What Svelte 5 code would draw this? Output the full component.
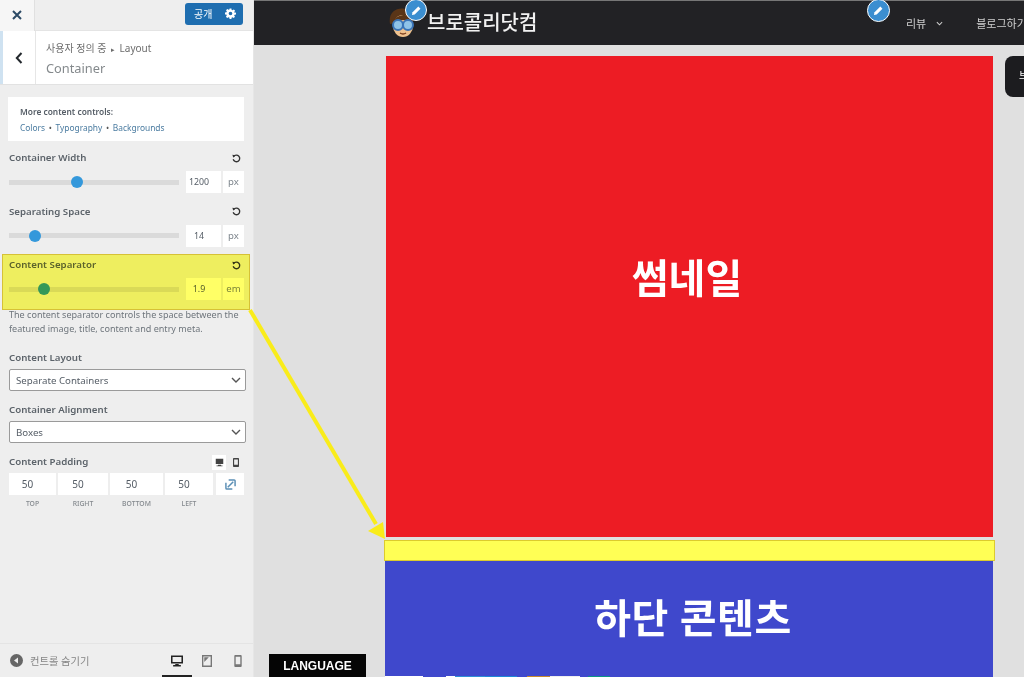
<script>
  const sliders = [
    { label: 'Container Width', pos: 62, value: '1200', unit: 'px' },
    { label: 'Separating Space', pos: 20, value: '14', unit: 'px' }
  ];
  const padding = [
    { v: '50', l: 'TOP', w: 47 },
    { v: '50', l: 'RIGHT', w: 50 },
    { v: '50', l: 'BOTTOM', w: 53 },
    { v: '50', l: 'LEFT', w: 48 }
  ];
  const strips = [
    { w: 38, c: '#ffffff' }, { w: 23, c: '#3f48cc' }, { w: 9, c: '#ffffff' }, { w: 30, c: '#2f8fd8' },
    { w: 32, c: '#1e88d8' }, { w: 10, c: '#3f48cc' }, { w: 23, c: '#c88a2c' }, { w: 30, c: '#eeeeee' },
    { w: 8, c: '#3f48cc' }, { w: 22, c: '#0d9488' }
  ];
</script>

<div class="page">
  <aside class="side">
    <div class="top">
      <button class="close" aria-label="닫기">
        <svg width="10" height="10" viewBox="0 0 10 10"><path d="M1 1l8 8M9 1l-8 8" stroke="#2c4a66" stroke-width="2"/></svg>
      </button>
      <button class="publish">
        <span>공개</span>
        <svg width="11" height="11" viewBox="0 0 24 24"><path fill="#fff" fill-rule="evenodd" d="M10 1h4l.6 3.2 1.9.8 2.7-1.8 2.8 2.8-1.8 2.7.8 1.9L24 10v4l-3.2.6-.8 1.9 1.8 2.7-2.8 2.8-2.7-1.8-1.9.8L14 24h-4l-.6-3.2-1.9-.8-2.7 1.8L2 19l1.8-2.7-.8-1.9L0 14v-4l3.2-.6.8-1.9L2.2 4.8 5 2l2.7 1.8 1.9-.8zM12 8a4 4 0 100 8 4 4 0 000-8z"/></svg>
      </button>
    </div>

    <div class="head">
      <button class="back" aria-label="뒤로">
        <svg width="8" height="12" viewBox="0 0 8 12"><path d="M6.5 1L1.8 6l4.7 5" fill="none" stroke="#23282d" stroke-width="2"/></svg>
      </button>
      <div class="titles">
        <div class="crumb">사용자 정의 중 <i>▸</i> Layout</div>
        <div class="title">Container</div>
      </div>
    </div>

    <div class="panel">
      <div class="notice">
        <b>More content controls:</b>
        <div class="links"><a href="#c">Colors</a> <em>•</em> <a href="#t">Typography</a> <em>•</em> <a href="#b">Backgrounds</a></div>
      </div>

      {#snippet reset()}
        <svg class="reset" width="9" height="9" viewBox="0 0 12 12"><path d="M2.2 3.5A4.4 4.4 0 1 1 1.6 7" fill="none" stroke="#333" stroke-width="1.8"/><path d="M.5 1l4 .6L1.7 5z" fill="#333"/></svg>
      {/snippet}

      {#each sliders as s}
        <section class="ctl">
          <div class="lab"><span>{s.label}</span>{@render reset()}</div>
          <div class="slide">
            <div class="track"><span class="thumb" style="left:{s.pos}px"></span></div>
            <span class="num">{s.value}</span>
            <span class="unit">{s.unit}</span>
          </div>
        </section>
      {/each}

      <section class="ctl sep">
        <div class="lab"><span>Content Separator</span>{@render reset()}</div>
        <div class="slide">
          <div class="track"><span class="thumb" style="left:29px"></span></div>
          <span class="num">1.9</span>
          <span class="unit">em</span>
        </div>
      </section>
      <p class="desc">The content separator controls the space between the featured image, title, content and entry meta.</p>

      <div class="lab plain first">Content Layout</div>
      <div class="select">Separate Containers
        <svg width="10" height="6" viewBox="0 0 10 6"><path d="M1 1l4 4 4-4" fill="none" stroke="#555" stroke-width="1.4"/></svg>
      </div>
      <div class="lab plain second">Container Alignment</div>
      <div class="select">Boxes
        <svg width="10" height="6" viewBox="0 0 10 6"><path d="M1 1l4 4 4-4" fill="none" stroke="#555" stroke-width="1.4"/></svg>
      </div>

      <div class="lab plain third">
        <span>Content Padding</span>
        <div class="devs">
          <span class="dev on"><svg width="9" height="9" viewBox="0 0 12 12"><path fill="#444" d="M1 1h10v7H1zM4 9h4v1h2v1H2v-1h2z"/></svg></span>
          <span class="dev"><svg width="6" height="9" viewBox="0 0 8 12"><path fill="#444" fill-rule="evenodd" d="M1 0h6a1 1 0 011 1v10a1 1 0 01-1 1H1a1 1 0 01-1-1V1a1 1 0 011-1zm.5 2v7h5V2z"/></svg></span>
        </div>
      </div>
      <div class="pads">
        {#each padding as p}
          <div class="pad" style="width:{p.w}px"><span class="padv">{p.v}</span><span class="padl">{p.l}</span></div>
        {/each}
        <div class="pad link"><span class="padv">
          <svg width="11" height="11" viewBox="0 0 12 12"><path d="M4 1h6a1 1 0 011 1v6M8 11H2a1 1 0 01-1-1V4M3 9l6-6" fill="none" stroke="#5b8fb5" stroke-width="1.6"/></svg>
        </span></div>
      </div>
    </div>

    <div class="foot">
      <span class="hide">
        <svg width="13" height="13" viewBox="0 0 13 13"><circle cx="6.5" cy="6.5" r="6.5" fill="#666"/><path d="M8 3.5v6L4 6.5z" fill="#eee"/></svg>
        컨트롤 숨기기
      </span>
      <div class="devices">
        <span class="device active"><svg width="12" height="12" viewBox="0 0 14 13"><path fill="#222" fill-rule="evenodd" d="M0 0h14v9.500H0zM1.800 1.800v5.900h10.400V1.800zM5 10h4v1.200h2.500V13h-9v-1.800H5z"/></svg></span>
        <span class="device"><svg width="10" height="12" viewBox="0 0 11 13"><path fill="#777" fill-rule="evenodd" d="M0 0h11v13H0zM1.500 1.500v10h8v-10zM2.500 2.500h5l-5 5z"/></svg></span>
        <span class="device"><svg width="8" height="12" viewBox="0 0 8 13"><path fill="#777" fill-rule="evenodd" d="M1 0h6a1 1 0 011 1v11a1 1 0 01-1 1H1a1 1 0 01-1-1V1a1 1 0 011-1zM1.500 2v8h5V2z"/></svg></span>
      </div>
    </div>
  </aside>

  <main class="preview">
    <header class="bar">
      <div class="brand">
        <svg class="avatar" width="28" height="32" viewBox="0 0 28 32">
          <path d="M1 18C-1 6 8 1 16 3c6 1 9 7 8 12z" fill="#5a3517"/>
          <ellipse cx="14" cy="20" rx="10" ry="11" fill="#f0c28e"/>
          <path d="M3 18c2-7 8-9 13-9 4 1 7 3 8 8-6-4-15-4-21 1z" fill="#5a3517"/>
          <circle cx="9" cy="19" r="5" fill="#8fc3e8" stroke="#3a74b8" stroke-width="2"/>
          <circle cx="19" cy="19" r="5" fill="#8fc3e8" stroke="#3a74b8" stroke-width="2"/>
          <path d="M11 27q3 2 6 0" stroke="#7a3d1c" stroke-width="1.400" fill="none"/>
        </svg>
        <span class="logo">브로콜리닷컴</span>
        <span class="pencil brandpen">
          <svg width="11" height="11" viewBox="0 0 12 12"><path d="M1 11l.7-3L8 1.700 10.300 4 4 10.300z" fill="#fff"/></svg>
        </span>
      </div>
      <nav class="nav">
        <span class="pencil navpen">
          <svg width="11" height="11" viewBox="0 0 12 12"><path d="M1 11l.7-3L8 1.700 10.300 4 4 10.300z" fill="#fff"/></svg>
        </span>
        <span class="item">리뷰</span>
        <svg class="caret" width="7" height="5" viewBox="0 0 8 5"><path d="M1 1l3 3 3-3" fill="none" stroke="#ccc" stroke-width="1.200"/></svg>
        <span class="item blog">블로그하기</span>
      </nav>
    </header>

    <div class="stage">
      <div class="column">
        <div class="thumbbox">썸네일</div>
        <div class="gap"></div>
        <div class="bottom">하단 콘텐츠</div>
        <div class="strips">
          {#each strips as s}<span style="width:{s.w}px;background:{s.c}"></span>{/each}
        </div>
      </div>
      <div class="sidecard"><span>브</span></div>
    </div>

    <div class="language">LANGUAGE</div>
  </main>

  <div class="hl"></div>
  <svg class="arrow" width="1024" height="677" viewBox="0 0 1024 677">
    <path d="M250 310L376 524" stroke="#f9ec1a" stroke-width="4" fill="none"/>
    <path d="M385 539l-17-8 15-9z" fill="#f9ec1a"/>
  </svg>
</div>

<style>
  :global(body) { margin: 0; }
  .page {
    position: relative;
    width: 1024px;
    height: 677px;
    overflow: hidden;
    display: flex;
    font-family: "Noto Sans", "Noto Sans CJK KR", sans-serif;
    background: #e0e0e0;
  }
  button { border: 0; padding: 0; font: inherit; cursor: pointer; }
  .side {
    width: 254px;
    flex: none;
    background: #eeeeee;
    border-right: 1px solid #e6e6e6;
    box-sizing: border-box;
    display: flex;
    flex-direction: column;
    height: 677px;
  }
  .top {
    height: 31px;
    flex: none;
    display: flex;
    justify-content: space-between;
    align-items: center;
    padding-right: 10px;
    border-bottom: 1px solid #e4e4e4;
    box-sizing: border-box;
  }
  .close {
    width: 35px;
    height: 31px;
    background: #f6f6f6;
    border-right: 1px solid #e0e0e0;
    display: flex;
    align-items: center;
    justify-content: center;
  }
  .publish {
    width: 58px;
    height: 22px;
    margin-top: -3px;
    background: #1f6eb0;
    border-radius: 3px;
    color: #fff;
    font-size: 10px;
    display: flex;
    align-items: center;
    justify-content: space-between;
    padding: 0 7px 0 9px;
    box-sizing: border-box;
  }
  .head {
    height: 54px;
    flex: none;
    display: flex;
    background: #fff;
    border-bottom: 1px solid #e2e2e2;
    box-sizing: border-box;
  }
  .back {
    width: 36px;
    background: #fff;
    border-left: 3px solid #cfe2f1;
    border-right: 1px solid #e6e6e6;
    box-sizing: border-box;
    display: flex;
    align-items: center;
    justify-content: center;
  }
  .titles { padding: 10px 0 0 10px; }
  .crumb { font-size: 10px; line-height: 14px; color: #6d6d6d; }
  .crumb i { font-style: normal; font-size: 7px; margin: 0 2px; }
  .title { font-size: 12.8px; line-height: 19px; margin-top: 2px; color: #84898c; }
  .panel { flex: 1; padding: 12px 9px 0 9px; }
  .notice {
    margin-left: -1px;
    width: 236px;
    height: 44px;
    box-sizing: border-box;
    background: #fff;
    padding: 8px 12px 0 12px;
    font-size: 8.4px;
    color: #555d66;
    margin-bottom: 8px;
  }
  .notice b { display: block; line-height: 14px; font-weight: 600; }
  .links { line-height: 14px; margin-top: 2px; }
  .links a { color: #4a7ba0; text-decoration: none; }
  .links em { font-style: normal; color: #555; margin: 0 1.5px; }
  .ctl { height: 53.5px; box-sizing: border-box; }
  .lab {
    display: flex;
    justify-content: space-between;
    align-items: center;
    width: 235px;
    font-size: 9.7px;
    font-weight: 600;
    line-height: 14px;
    color: #5c636a;
    padding-top: 2px;
  }
  .reset { margin-right: 3px; }
  .slide { display: flex; align-items: center; margin-top: 6px; height: 22px; }
  .track {
    position: relative;
    width: 170px;
    height: 5px;
    background: #dadada;
    margin-right: 7px;
  }
  .thumb {
    position: absolute;
    top: -3.500px;
    width: 12px;
    height: 12px;
    border-radius: 50%;
    background: #3498db;
  }
  .num, .unit {
    background: #fff;
    height: 22px;
    line-height: 22px;
    text-align: center;
    font-size: 9.600px;
    color: #555d66;
  }
  .num { width: 35px; margin-right: 2px; padding-right: 9px; box-sizing: border-box; font-size: 8.8px; }
  .unit { width: 21px; color: #7d858c; }
  .sep { height: 53px; }
  .desc {
    margin: -1px 0 0;
    width: 234px;
    font-size: 9.050px;
    line-height: 14px;
    color: #6e757c;
  }
  .plain { font-size: 9.700px; padding-top: 1px; }
  .first { margin-top: 14px; }
  .second { margin-top: 11px; }
  .third { margin-top: 11px; height: 14px; }
  .select {
    width: 237px;
    height: 22px;
    margin-top: 4px;
    background: #fff;
    border: 1px solid #9a9a9a;
    border-radius: 2px;
    box-sizing: border-box;
    padding: 0 4px 0 6px;
    font-size: 9.700px;
    color: #555d66;
    display: flex;
    justify-content: space-between;
    align-items: center;
  }
  .devs { display: flex; align-items: center; gap: 3px; margin-right: 1px; }
  .dev { width: 14px; height: 15px; display: flex; align-items: center; justify-content: center; }
  .dev.on { background: #fff; }
  .pads { display: flex; gap: 2px; margin-top: 4px; }
  .pad { display: flex; flex-direction: column; align-items: center; }
  .padv {
    width: 100%;
    height: 22px;
    background: #fff;
    display: flex;
    align-items: center;
    justify-content: center;
    font-size: 10px;
    color: #555d66;
    padding-right: 10px;
    box-sizing: border-box;
  }
  .link .padv { padding-right: 0; }
  .padl { font-size: 6.800px; line-height: 16px; color: #84898e; margin-top: 1px; font-weight: 500; }
  .link { width: 28px; margin-left: 1px; }
  .foot {
    height: 33px;
    flex: none;
    border-top: 1px solid #e4e4e4;
    display: flex;
    justify-content: space-between;
    align-items: center;
    padding: 0 0 0 10px;
  }
  .hide { display: flex; align-items: center; gap: 7px; font-size: 10.300px; color: #858585; }
  .devices { display: flex; align-items: flex-end; height: 33px; }
  .device {
    width: 30.500px;
    height: 33px;
    box-sizing: border-box;
    display: flex;
    align-items: center;
    justify-content: center;
    border-bottom: 2px solid transparent;
    padding-top: 2px;
  }
  .active { border-bottom-color: #222; }
  .preview {
    flex: 1;
    position: relative;
    display: flex;
    flex-direction: column;
    min-width: 0;
  }
  .bar {
    height: 45px;
    flex: none;
    background: #222225;
    border-top: 1px solid #777;
    box-sizing: border-box;
    display: flex;
    padding-left: 135px;
    position: relative;
    color: #fff;
  }
  .brand { display: flex; align-items: center; gap: 10px; position: relative; height: 44px; }
  .avatar { margin-top: -2px; }
  .logo { font-size: 20px; font-weight: 500; color: #f2f2f2; margin-top: -3px; white-space: nowrap; }
  .pencil {
    position: absolute;
    width: 20px;
    height: 20px;
    border-radius: 50%;
    background: #3b8ed0;
    border: 1px solid #fff;
    box-sizing: border-box;
    display: flex;
    align-items: center;
    justify-content: center;
  }
  .brandpen { left: 16px; top: -2px; width: 22px; height: 22px; }
  .nav {
    position: absolute;
    left: 652px;
    top: 0;
    height: 44px;
    display: flex;
    align-items: center;
    white-space: nowrap;
    font-size: 11px;
    color: #cfcfcf;
  }
  .navpen { left: -39px; top: -2px; width: 23px; height: 23px; }
  .item { margin-top: -1px; }
  .caret { margin-left: 10px; }
  .blog { margin-left: 33px; }
  .stage {
    flex: 1;
    display: flex;
    align-items: flex-start;
    padding: 11px 0 0 131px;
    overflow: hidden;
  }
  .column { width: 608px; flex: none; }
  .thumbbox {
    height: 481px;
    margin-left: 1px;
    width: 607px;
    background: #ed1c24;
    color: #fff;
    font-size: 40px;
    font-weight: 700;
    display: flex;
    align-items: center;
    justify-content: center;
    padding: 0 5px 41px 0;
    box-sizing: border-box;
  }
  .gap {
    height: 21px;
    width: 611px;
    margin-top: 3px;
    margin-left: -1px;
    box-sizing: border-box;
    background: #ffff55;
    border: 1px solid #dccb2d;
  }
  .bottom {
    height: 115px;
    background: #3f48cc;
    color: #fff;
    font-size: 40px;
    font-weight: 700;
    text-align: center;
    line-height: 114px;
    letter-spacing: .5px;
    padding-left: 8px;
    box-sizing: border-box;
    white-space: nowrap;
  }
  .strips { display: flex; height: 1px; background: #3f48cc; }
  .strips span { height: 1px; }
  .sidecard {
    margin-left: 12px;
    width: 60px;
    height: 41px;
    background: #1c1c1f;
    border-radius: 8px;
    flex: none;
    color: #fff;
    font-size: 10px;
    line-height: 38px;
    padding-left: 14px;
    box-sizing: border-box;
  }
  .language {
    position: absolute;
    left: 15px;
    bottom: 0;
    width: 97px;
    height: 23px;
    background: #050505;
    color: #fff;
    font: 700 12px/24px "Liberation Sans", sans-serif;
    text-align: center;
  }
  .hl {
    position: absolute;
    left: 2px;
    top: 254px;
    width: 248px;
    height: 56px;
    box-sizing: border-box;
    border: 1px solid #e6cf3a;
    background: rgba(255, 255, 0, .6);
    mix-blend-mode: multiply;
  }
  .arrow { position: absolute; left: 0; top: 0; pointer-events: none; }
</style>
